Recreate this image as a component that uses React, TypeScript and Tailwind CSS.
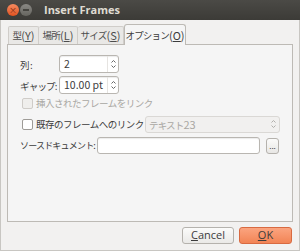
const jp = { fontFamily: '"Noto Sans CJK JP", "Noto Sans", sans-serif' };

function J({ children }: { children: React.ReactNode }) {
  return <span className="whitespace-nowrap text-[9.5px] tracking-[-0.8px]">{children}</span>;
}

function Arrows({ color }: { color: string }) {
  return (
    <svg width="5" height="10" viewBox="0 0 5 10" fill="none" stroke={color} strokeWidth="1">
      <path d="M0.5 3.5 L2.5 1.5 L4.5 3.5" />
      <path d="M0.5 6.5 L2.5 8.5 L4.5 6.5" />
    </svg>
  );
}

function Spin({ value }: { value: string }) {
  return (
    <div className="flex h-[18px] w-[60px] items-center rounded-[3px] border border-[#b9b6b1] bg-white shadow-[inset_0_1px_1px_rgba(0,0,0,0.08)]">
      <span className="flex-1 whitespace-nowrap pl-[4px] text-[10.5px] text-[#3c3c3c]">{value}</span>
      <div className="flex h-full w-[11px] items-center justify-center border-l border-[#e6e4e1]">
        <Arrows color="#666" />
      </div>
    </div>
  );
}

export default function App() {
  return (
    <div className="flex h-[251px] w-[300px] flex-col overflow-hidden bg-[#f2f1f0]" style={jp}>
      {/* Title bar */}
      <div className="flex h-[20px] items-center bg-gradient-to-b from-[#4b4a46] to-[#3c3b37] pl-[7px]">
        <div className="flex h-[12px] w-[12px] items-center justify-center rounded-full bg-gradient-to-b from-[#f58a5e] to-[#e0521f] text-[8px] leading-none text-[#7a2a10]">
          ×
        </div>
        <div className="ml-[1px] flex h-[12px] w-[12px] items-center justify-center rounded-full bg-gradient-to-b from-[#8a8985] to-[#66655f]">
          <div className="h-[2px] w-[6px] bg-[#45443f]" />
        </div>
        <span className="ml-[12px] text-[11px] font-bold text-[#dfdbd2]" style={{ fontFamily: '"Open Sans", sans-serif' }}>
          Insert Frames
        </span>
      </div>

      {/* Body */}
      <div className="flex flex-1 flex-col border-x border-b border-[#c8c6c2] px-[6px] pt-[4px]">
        {/* Tabs */}
        <div className="flex h-[20px] items-end pl-[1px] text-[11px] whitespace-nowrap">
          <div className="flex h-[18px] w-[31px] items-center justify-center rounded-t-[2px] border border-b-0 border-[#d0cdc9] bg-[#e9e8e6] text-[#4c4c4c]">
            <J>型</J>(<u>Y</u>)
          </div>
          <div className="flex h-[18px] w-[39px] items-center justify-center rounded-t-[2px] border border-b-0 border-l-0 border-[#d0cdc9] bg-[#e9e8e6] text-[#4c4c4c]">
            <J>場所</J>(<u>L</u>)
          </div>
          <div className="flex h-[18px] w-[46px] items-center justify-center rounded-t-[2px] border border-b-0 border-l-0 border-[#d0cdc9] bg-[#e9e8e6] text-[#4c4c4c]">
            <J>サイズ</J>(<u>S</u>)
          </div>
          <div className="relative top-[1px] flex h-[21px] w-[62px] items-center justify-center rounded-t-[3px] border border-b-0 border-[#bdbab5] bg-[#f5f5f5] text-[#3c3c3c]">
            <J>オプション</J>(<u>O</u>)
          </div>
        </div>

        {/* Panel */}
        <div className="flex h-[178px] flex-col border border-[#bdbab5] bg-[#f5f5f5] pl-[12px] pt-[10px] text-[11px] text-[#3c3c3c]">
          <div className="flex items-center">
            <span className="w-[39px]"><J>列 :</J></span>
            <Spin value="2" />
          </div>
          <div className="mt-[3px] flex items-center">
            <span className="w-[39px]"><J>ギャップ:</J></span>
            <Spin value="10.00 pt" />
          </div>
          <div className="flex h-[18px] items-center text-[#a9a7a3]">
            <div className="ml-[2px] h-[11px] w-[11px] rounded-[2px] border border-[#cfccc8] bg-[#efeeec]" />
            <span className="ml-[3px] whitespace-nowrap text-[9.5px] tracking-[-0.5px]">挿入されたフレームをリンク</span>
          </div>
          <div className="mt-[3px] flex h-[18px] items-center">
            <div className="ml-[2px] h-[11px] w-[11px] rounded-[2px] border border-[#9e9b97] bg-white" />
            <span className="ml-[3px] w-[109px] whitespace-nowrap text-[9.5px] tracking-[-0.5px]">既存のフレームへのリンク</span>
            <div className="flex h-[17px] w-[135px] items-center rounded-[3px] border border-[#dad8d5] bg-[#f1f0ef] pl-[3px] pr-[3px] text-[#a9a7a3]">
              <span className="flex-1 whitespace-nowrap"><J>テキスト</J>23</span>
              <Arrows color="#b0aeaa" />
            </div>
          </div>
          <div className="mt-[4px] flex items-center">
            <span className="w-[77px] whitespace-nowrap text-[9px] tracking-[-0.8px]">ソースドキュメント:</span>
            <div className="h-[17px] w-[163px] rounded-[3px] border border-[#b9b6b1] bg-white shadow-[inset_0_1px_1px_rgba(0,0,0,0.08)]" />
            <div className="ml-[6px] flex h-[16px] w-[13px] items-end justify-center rounded-[3px] border border-[#b5b2ad] bg-gradient-to-b from-[#fbfbfa] to-[#e8e7e5] pb-[3px] text-[8px] leading-none">
              ...
            </div>
          </div>
        </div>

        {/* Buttons */}
        <div className="mt-[5px] flex justify-end gap-[5px] pr-[1px]">
          <div className="flex h-[17px] w-[52px] items-center justify-center rounded-[3px] border border-[#b5b2ad] bg-gradient-to-b from-[#fbfbfa] to-[#eae9e7] text-[11px] text-[#3c3c3c]" style={{ fontFamily: '"Open Sans", sans-serif' }}>
            <span><u>C</u>ancel</span>
          </div>
          <div className="flex h-[17px] w-[53px] items-center justify-center rounded-[3px] border border-[#d86a41] bg-gradient-to-b from-[#fba47f] to-[#f28455] text-[11px] text-[#3c3c3c]" style={{ fontFamily: '"Open Sans", sans-serif' }}>
            <span><u>O</u>K</span>
          </div>
        </div>
      </div>
    </div>
  );
}
